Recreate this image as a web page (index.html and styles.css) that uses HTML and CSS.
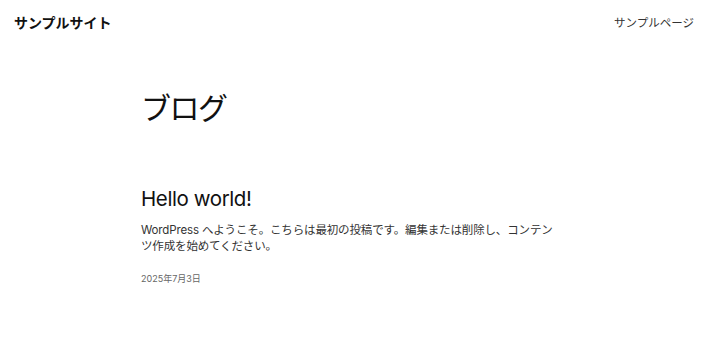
FILE: index.html
```html
<!DOCTYPE html>
<html lang="ja">
<head>
<meta charset="utf-8">
<title>サンプルサイト</title>
<link rel="stylesheet" href="styles.css">
</head>
<body>
<header class="site-header">
  <a class="site-title" href="#">サンプルサイト</a>
  <nav class="site-nav"><a href="#">サンプルページ</a></nav>
</header>
<main class="main">
  <h1 class="page-title">ブログ</h1>
  <article class="post">
    <h2 class="post-title">Hello world!</h2>
    <p class="post-excerpt">WordPress へようこそ。こちらは最初の投稿です。編集または削除し、コンテンツ作成を始めてください。</p>
    <div class="post-date">2025年7月3日</div>
  </article>
</main>
</body>
</html>
```

FILE: styles.css
```css
* { box-sizing: border-box; }
html, body { margin: 0; padding: 0; background: #fff; }
body {
  font-family: "Inter", "Noto Sans CJK JP", sans-serif;
  color: #111;
}
a { color: inherit; text-decoration: none; }
.site-header {
  display: flex;
  justify-content: space-between;
  align-items: center;
  padding: 12px 16px 12px 14px;
  height: 44px;
}
.site-title {
  font-size: 14px;
  font-weight: 700;
  color: #111;
}
.site-nav {
  font-size: 11.5px;
  color: #333;
}
.main {
  width: 428px;
  margin: 0 auto;
  padding-top: 44px;
}
.page-title {
  margin: 0;
  font-size: 30px;
  font-weight: 400;
  line-height: 40px;
  letter-spacing: -1.5px;
}
.post { margin-top: 58px; }
.post-title {
  margin: 0;
  font-size: 20.5px;
  font-weight: 400;
  line-height: 26px;
  letter-spacing: -0.4px;
}
.post-excerpt {
  margin: 10px 0 0;
  font-size: 11.5px;
  line-height: 16px;
  letter-spacing: -0.15px;
  color: #333;
  padding-right: 12px;
}
.post-date {
  margin-top: 18px;
  font-size: 9px;
  color: #666;
}
```
